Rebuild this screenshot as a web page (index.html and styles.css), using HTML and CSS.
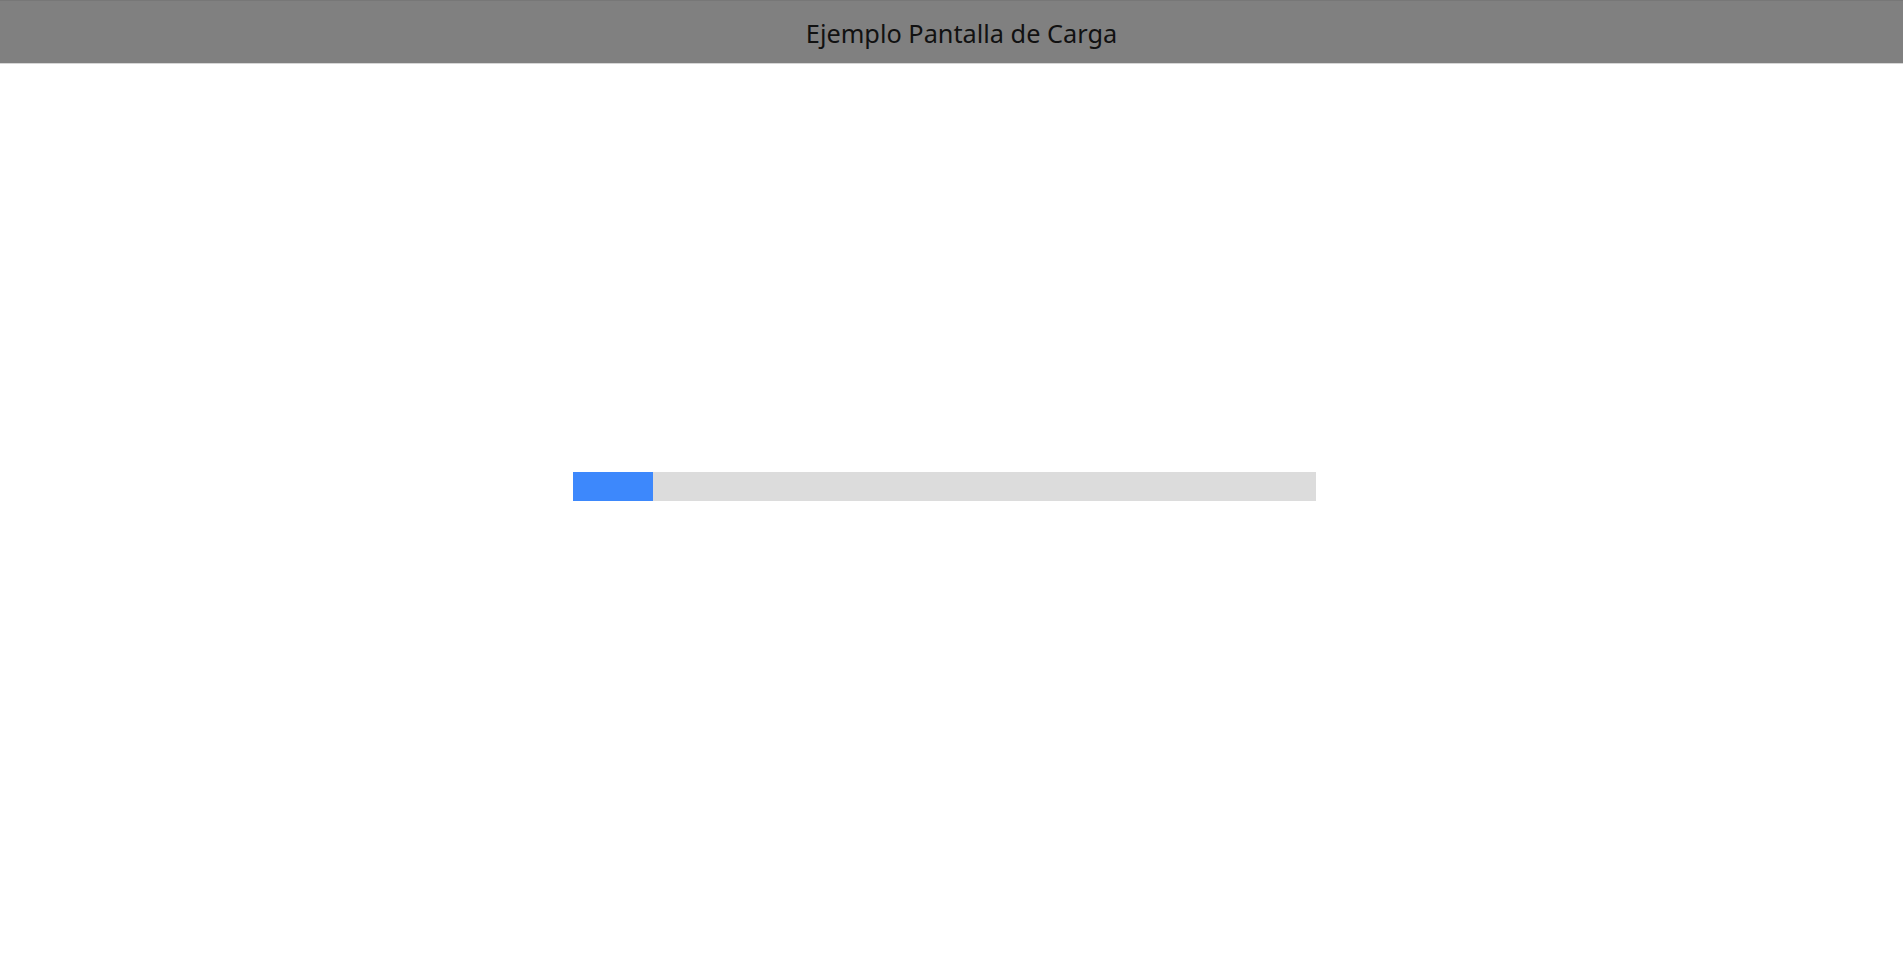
FILE: index.html
```html
<!DOCTYPE html>
<html lang="es">
<head>
<meta charset="utf-8">
<title>Ejemplo Pantalla de Carga</title>
<link rel="stylesheet" href="styles.css">
</head>
<body>
<header class="topbar">
  <h1 class="title">Ejemplo Pantalla de Carga</h1>
</header>
<main class="content">
  <div class="progress">
    <div class="progress-fill" style="width:80px"></div>
  </div>
</main>
</body>
</html>
```
FILE: styles.css
```css
html, body {
  margin: 0;
  padding: 0;
  background: #ffffff;
  font-family: "Noto Sans", "Open Sans", sans-serif;
}
.topbar {
  background: #808080;
  border-top: 1px solid #777;
  border-bottom: 1px solid #d6d6d6;
  display: flex;
  align-items: center;
  justify-content: center;
  box-sizing: border-box;
  height: 64px;
  padding-left: 20px;
  padding-top: 3px;
}
.title {
  margin: 0;
  font-size: 25.3px;
  font-weight: 400;
  color: #111;
  line-height: 1;
}
.content {
  padding-top: 408px;
  padding-left: 573px;
}
.progress {
  width: 743px;
  height: 29px;
  background: #dcdcdc;
  display: flex;
}
.progress-fill {
  height: 100%;
  background: #3d88fc;
}
```
